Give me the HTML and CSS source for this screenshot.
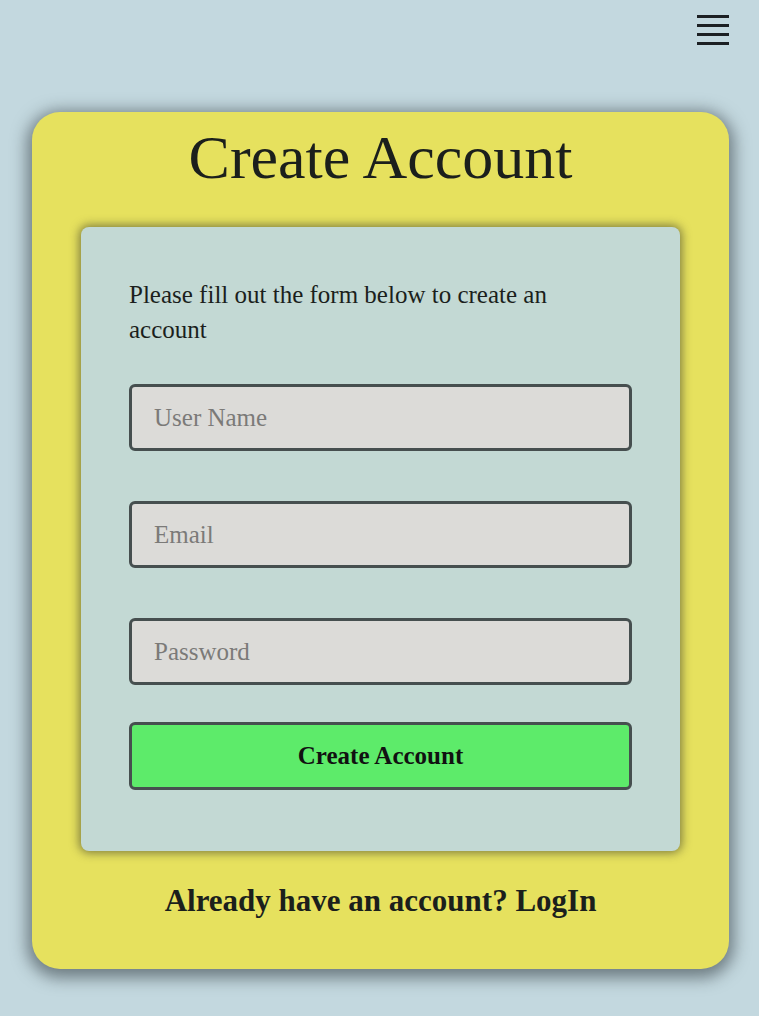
FILE: index.html
```html
<!DOCTYPE html>
<html lang="en">
<head>
<meta charset="utf-8">
<title>Create Account</title>
<link rel="stylesheet" href="styles.css">
</head>
<body>
<header class="topbar">
  <button class="menu" aria-label="Menu">
    <span></span><span></span><span></span><span></span>
  </button>
</header>
<main class="card">
  <h1 class="title">Create Account</h1>
  <section class="panel">
    <p class="intro">Please fill out the form below to create an account</p>
    <form class="form">
      <input class="field" type="text" placeholder="User Name">
      <input class="field" type="email" placeholder="Email">
      <input class="field" type="password" placeholder="Password">
      <button class="submit" type="button">Create Account</button>
    </form>
  </section>
  <p class="login">Already have an account? LogIn</p>
</main>
</body>
</html>
```

FILE: styles.css
```css
* { box-sizing: border-box; }
html, body { margin: 0; padding: 0; }
body {
  background: #c3d8df;
  font-family: "Liberation Serif", "DejaVu Serif", serif;
  color: #1b1f1c;
  min-height: 1016px;
}
.topbar {
  display: flex;
  justify-content: flex-end;
  padding: 15px 30px 0 0;
  height: 112px;
}
.menu {
  display: flex;
  flex-direction: column;
  gap: 6px;
  width: 32px;
  padding: 0;
  border: 0;
  background: none;
  height: 30px;
}
.menu span {
  display: block;
  height: 3px;
  width: 32px;
  background: #1c2024;
}
.card {
  margin: 0 30px 0 32px;
  height: 857px;
  background: #e6e15e;
  border-radius: 28px;
  box-shadow: 0 4px 16px 5px rgba(40, 50, 55, 0.55);
  padding: 10px 49px 0 49px;
  display: flex;
  flex-direction: column;
  align-items: center;
}
.title {
  margin: 0;
  font-weight: normal;
  font-size: 62px;
  line-height: 70px;
  height: 105px;
  text-align: center;
}
.panel {
  width: 599px;
  height: 624px;
  background: #c3d9d4;
  border-radius: 8px;
  box-shadow: 0 0 10px 2px rgba(60, 60, 40, 0.6);
  padding: 50px 48px 0 48px;
}
.intro {
  margin: 0;
  font-size: 25px;
  line-height: 35px;
  padding-right: 40px;
}
.form {
  display: flex;
  flex-direction: column;
  margin-top: 37px;
}
.field {
  height: 67px;
  margin-bottom: 50px;
  border: 3px solid #464f4f;
  border-radius: 6px;
  background: #dcdbd8;
  padding: 0 22px;
  font-family: inherit;
  font-size: 25px;
  color: #333;
}
.field:last-of-type { margin-bottom: 37px; }
.field::placeholder { color: #7b7a78; }
.submit {
  height: 68px;
  border: 3px solid #464f4f;
  border-radius: 6px;
  background: #5deb6a;
  font-family: inherit;
  font-weight: bold;
  font-size: 25px;
  color: #111;
}
.login {
  margin: 30px 0 0;
  font-size: 31px;
  font-weight: bold;
  line-height: 40px;
  text-align: center;
}
```
